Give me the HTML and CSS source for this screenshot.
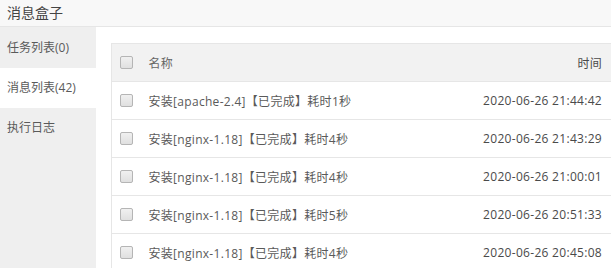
FILE: index.html
```html
<!DOCTYPE html>
<html lang="zh">
<head>
<meta charset="utf-8">
<link rel="stylesheet" href="styles.css">
</head>
<body>
<div class="title">消息盒子</div>
<div class="body">
  <ul class="side">
    <li>任务列表(0)</li>
    <li class="active">消息列表(42)</li>
    <li>执行日志</li>
  </ul>
  <div class="main">
    <table class="tbl">
      <thead>
        <tr><th class="ck"><span class="box"></span></th><th>名称</th><th class="time">时间</th></tr>
      </thead>
      <tbody>
        <tr><td class="ck"><span class="box"></span></td><td>安装[apache-2.4]【已完成】耗时1秒</td><td class="time">2020-06-26 21:44:42</td></tr>
        <tr><td class="ck"><span class="box"></span></td><td>安装[nginx-1.18]【已完成】耗时4秒</td><td class="time">2020-06-26 21:43:29</td></tr>
        <tr><td class="ck"><span class="box"></span></td><td>安装[nginx-1.18]【已完成】耗时4秒</td><td class="time">2020-06-26 21:00:01</td></tr>
        <tr><td class="ck"><span class="box"></span></td><td>安装[nginx-1.18]【已完成】耗时5秒</td><td class="time">2020-06-26 20:51:33</td></tr>
        <tr><td class="ck"><span class="box"></span></td><td>安装[nginx-1.18]【已完成】耗时4秒</td><td class="time">2020-06-26 20:45:08</td></tr>
      </tbody>
    </table>
  </div>
</div>
</body>
</html>
```
FILE: styles.css
```css
html, body {
  margin: 0;
  padding: 0;
  height: 100%;
  overflow: hidden;
  background: #fff;
  font-family: "Open Sans", "Noto Sans CJK SC", sans-serif;
  font-size: 12px;
  color: #5a5a5a;
}
.title {
  height: 27px;
  line-height: 26px;
  padding-left: 7px;
  font-size: 14px;
  color: #444;
  background: #f8f8f8;
  border-bottom: 1px solid #e6e6e6;
  box-sizing: border-box;
}
.body {
  display: flex;
  height: calc(100% - 27px);
}
.side {
  list-style: none;
  margin: 0;
  padding: 0;
  width: 96px;
  flex: none;
  background: #efefef;
}
.side li {
  height: 40px;
  line-height: 40px;
  padding-left: 7px;
  color: #5a5a5a;
}
.side li:first-child {
  margin-top: 1px;
}
.side li.active {
  background: #fff;
}
.main {
  flex: 1;
  padding: 16px 0 0 15px;
  min-width: 0;
}
.tbl {
  border-collapse: collapse;
  width: 502px;
  table-layout: fixed;
}
.tbl th, .tbl td {
  height: 37px;
  padding: 0;
  border: 1px solid #e6e6e6;
  border-left: none;
  border-right: none;
  text-align: left;
  font-weight: normal;
  white-space: nowrap;
  letter-spacing: 0.3px;
}
.tbl tr > :first-child {
  border-left: 1px solid #e6e6e6;
}
.tbl thead tr {
  background: #f2f2f2;
}
.tbl th {
  color: #666;
}
.tbl .ck {
  width: 37px;
  padding-left: 8px;
  box-sizing: border-box;
}
.tbl .time {
  width: 170px;
  text-align: right;
  padding-right: 11px;
  color: #4a4a4a;
}
.box {
  display: block;
  width: 11px;
  height: 11px;
  border: 1px solid #b5b5b5;
  border-radius: 2px;
  background: linear-gradient(#f0f0f0, #e0e0e0);
}
```
